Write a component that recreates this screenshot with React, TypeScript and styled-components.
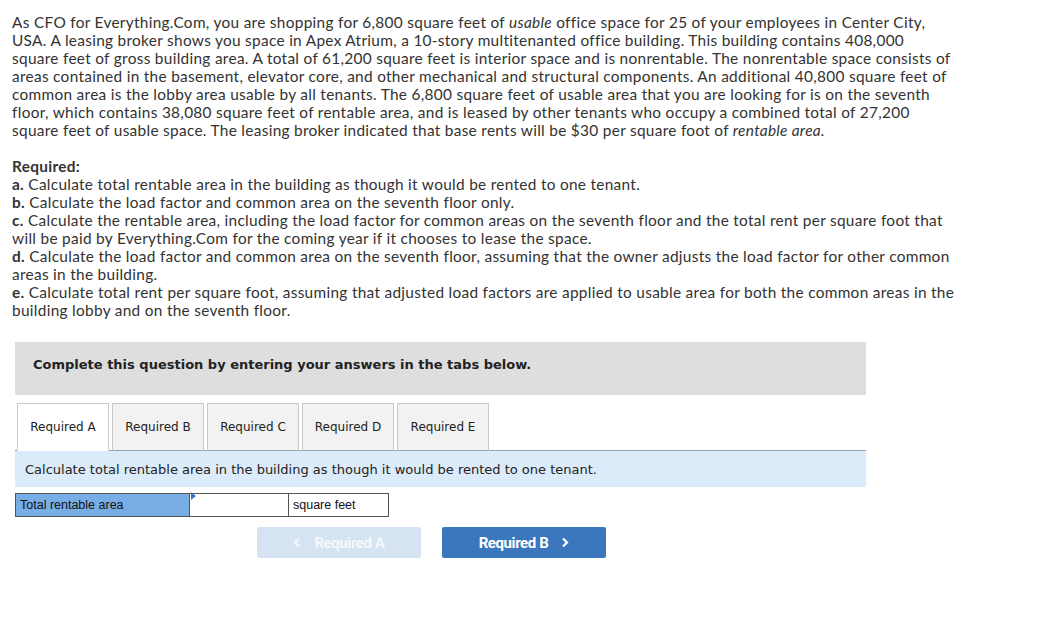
import React, { useState } from 'react';
import styled, { createGlobalStyle } from 'styled-components';

const GlobalStyle = createGlobalStyle`
  body {
    margin: 0;
    background: #fff;
    color: #333;
    font-family: Lato, "Open Sans", Arial, sans-serif;
  }
`;

const Page = styled.div`
  width: 1050px;
  padding: 13px 0 40px 12px;
  box-sizing: border-box;
`;

const Prose = styled.p`
  margin: 0;
  width: 970px;
  font-size: 15.4px;
  line-height: 18px;
  letter-spacing: 0.3px;
  color: #333;
`;

const RequiredBlock = styled.div`
  margin-top: 18px;
  width: 970px;
  font-size: 15.4px;
  line-height: 18px;
  letter-spacing: 0.3px;
`;

const Heading = styled.div`
  font-weight: 700;
`;

const Item = styled.div`
  b {
    font-weight: 700;
  }
`;

const Workspace = styled.div`
  margin: 23px 0 0 3px;
  width: 851px;
`;

const Banner = styled.div`
  height: 53px;
  box-sizing: border-box;
  padding: 14px 18px 0;
  background: #dedede;
  font-family: "DejaVu Sans", Verdana, sans-serif;
  font-weight: 700;
  font-size: 13px;
  line-height: 18px;
  color: #222;
`;

const TabBar = styled.div`
  display: flex;
  gap: 3px;
  margin-top: 8px;
  padding-left: 2px;
  border-bottom: 1px solid #9aa3ad;
`;

const Tab = styled.button<{ $active: boolean }>`
  width: 92px;
  height: 48px;
  margin-bottom: -1px;
  border: 1px solid #c9c9c9;
  border-bottom: ${({ $active }) => ($active ? '1px solid #fff' : '1px solid #9aa3ad')};
  background: ${({ $active }) => ($active ? '#fff' : '#f2f2f2')};
  font-family: "DejaVu Sans", Verdana, sans-serif;
  font-size: 12px;
  color: #222;
  padding: 0;
  cursor: pointer;
`;

const Instruction = styled.div`
  height: 36px;
  display: flex;
  align-items: center;
  padding-left: 10px;
  background: #dcebf9;
  font-family: "DejaVu Sans", Verdana, sans-serif;
  font-size: 13px;
  color: #222;
`;

const AnswerRow = styled.div`
  display: flex;
  margin-top: 6px;
  height: 24px;
`;

const Cell = styled.div<{ $w: number; $bg?: string }>`
  width: ${({ $w }) => $w}px;
  box-sizing: border-box;
  border: 1px solid #555;
  margin-left: -1px;
  &:first-child {
    margin-left: 0;
  }
  background: ${({ $bg }) => $bg || '#fff'};
  display: flex;
  align-items: center;
  padding-left: 4px;
  font-family: "Liberation Sans", Arial, sans-serif;
  font-size: 12.5px;
  color: #111;
  position: relative;
`;

const Marker = styled.span`
  position: absolute;
  top: 1px;
  left: 1px;
  width: 0;
  height: 0;
  border-top: 4px solid transparent;
  border-bottom: 4px solid transparent;
  border-left: 5px solid #3c78bf;
  transform: translateY(-3px);
`;

const NavRow = styled.div`
  display: flex;
  gap: 21px;
  margin-top: 10px;
  padding-left: 242px;
`;

const NavButton = styled.button<{ $disabled?: boolean }>`
  width: 164px;
  height: 31px;
  border: none;
  border-radius: 2px;
  background: ${({ $disabled }) => ($disabled ? '#d5e3f2' : '#3b77bd')};
  color: ${({ $disabled }) => ($disabled ? '#f4f8fc' : '#fff')};
  font-family: Roboto, "Liberation Sans", sans-serif;
  font-weight: 700;
  font-size: 15px;
  letter-spacing: -0.4px;
  display: flex;
  align-items: center;
  justify-content: center;
  gap: 13px;
  cursor: ${({ $disabled }) => ($disabled ? 'default' : 'pointer')};
`;

const Chevron = ({ dir }: { dir: 'left' | 'right' }) => (
  <svg width="8" height="11" viewBox="0 0 8 11">
    <path
      d={dir === 'left' ? 'M6 1.5 L2 5.5 L6 9.5' : 'M2 1.5 L6 5.5 L2 9.5'}
      fill="none"
      stroke="currentColor"
      strokeWidth="2.2"
    />
  </svg>
);

const tabs = ['Required A', 'Required B', 'Required C', 'Required D', 'Required E'];

export default function App() {
  const [active, setActive] = useState(0);

  return (
    <Page>
      <GlobalStyle />
      <Prose>
        As CFO for Everything.Com, you are shopping for 6,800 square feet of <i>usable</i> office space for 25 of
        your employees in Center City,
        <br />
        USA. A leasing broker shows you space in Apex Atrium, a 10-story multitenanted office building. This
        building contains 408,000
        <br />
        square feet of gross building area. A total of 61,200 square feet is interior space and is nonrentable. The
        nonrentable space consists of
        <br />
        areas contained in the basement, elevator core, and other mechanical and structural components. An
        additional 40,800 square feet of
        <br />
        common area is the lobby area usable by all tenants. The 6,800 square feet of usable area that you are
        looking for is on the seventh
        <br />
        floor, which contains 38,080 square feet of rentable area, and is leased by other tenants who occupy a
        combined total of 27,200
        <br />
        square feet of usable space. The leasing broker indicated that base rents will be $30 per square foot of{' '}
        <i>rentable area.</i>
      </Prose>

      <RequiredBlock>
        <Heading>Required:</Heading>
        <Item><b>a.</b> Calculate total rentable area in the building as though it would be rented to one tenant.</Item>
        <Item><b>b.</b> Calculate the load factor and common area on the seventh floor only.</Item>
        <Item>
          <b>c.</b> Calculate the rentable area, including the load factor for common areas on the seventh floor and
          the total rent per square foot that
          <br />
          will be paid by Everything.Com for the coming year if it chooses to lease the space.
        </Item>
        <Item>
          <b>d.</b> Calculate the load factor and common area on the seventh floor, assuming that the owner adjusts the
          load factor for other common
          <br />
          areas in the building.
        </Item>
        <Item>
          <b>e.</b> Calculate total rent per square foot, assuming that adjusted load factors are applied to usable area
          for both the common areas in the
          <br />
          building lobby and on the seventh floor.
        </Item>
      </RequiredBlock>

      <Workspace>
        <Banner>Complete this question by entering your answers in the tabs below.</Banner>

        <TabBar>
          {tabs.map((t, i) => (
            <Tab key={t} $active={i === active} onClick={() => setActive(i)}>
              {t}
            </Tab>
          ))}
        </TabBar>

        <Instruction>Calculate total rentable area in the building as though it would be rented to one tenant.</Instruction>

        <AnswerRow>
          <Cell $w={175} $bg="#78aee6">Total rentable area</Cell>
          <Cell $w={100}>
            <Marker />
          </Cell>
          <Cell $w={101}>square feet</Cell>
        </AnswerRow>

        <NavRow>
          <NavButton $disabled>
            <Chevron dir="left" />
            Required A
          </NavButton>
          <NavButton>
            Required B
            <Chevron dir="right" />
          </NavButton>
        </NavRow>
      </Workspace>
    </Page>
  );
}
